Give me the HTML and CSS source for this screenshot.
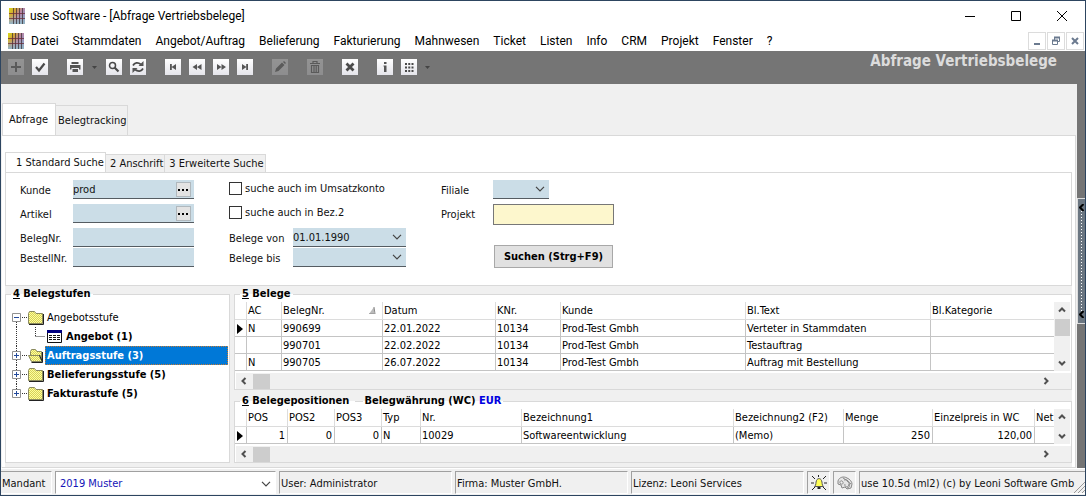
FILE: index.html
```html
<!DOCTYPE html>
<html lang="de">
<head>
<meta charset="utf-8">
<title>use Software - [Abfrage Vertriebsbelege]</title>
<link rel="stylesheet" href="styles.css">
</head>
<body>
<svg class="defs" aria-hidden="true">
  <defs>
    <linearGradient id="lgTop" x1="0" y1="0" x2="1" y2=".6">
      <stop offset="0" stop-color="#d8dc14"/><stop offset=".35" stop-color="#d2a03c"/><stop offset=".65" stop-color="#b884a4"/><stop offset="1" stop-color="#9098c8"/>
    </linearGradient>
    <linearGradient id="lgLow" x1="0" y1="0" x2="0" y2="1">
      <stop offset=".4" stop-color="#9cc0c0" stop-opacity="0"/><stop offset="1" stop-color="#94b4c4"/>
    </linearGradient>
    <pattern id="weave" width="2" height="2" patternUnits="userSpaceOnUse">
      <rect width="2" height="2" fill="#ffff9c"/><rect width="1" height="1" fill="#d6d05a"/><rect x="1" y="1" width="1" height="1" fill="#d6d05a"/>
    </pattern>
    <symbol id="logo" viewBox="0 0 16 16">
      <rect width="16" height="16" fill="url(#lgTop)"/><rect width="16" height="16" fill="url(#lgLow)"/>
      <path d="M4.500 0v16M7.500 0v16M10.500 0v16M13.500 0v16" stroke="#3c3034" stroke-opacity=".75"/>
      <path d="M0 5.500h16M0 10.500h16" stroke="#6b2a38" stroke-opacity=".75"/>
    </symbol>
    <symbol id="down" viewBox="0 0 10 6"><path d="M1 .8l4 4 4-4" fill="none" stroke="#444" stroke-width="1.200"/></symbol>
    <symbol id="arrow" viewBox="0 0 8 8"><path d="M1 5.500l3-3 3 3" fill="none" stroke="#505050" stroke-width="2"/></symbol>
    <symbol id="caret" viewBox="0 0 5 3"><path d="M0 0h5L2.500 3z" fill="#444"/></symbol>
    <symbol id="folder" viewBox="0 0 16 14">
      <path d="M.5 12.500V2.500l1-2h5l1.500 2h6.500v10z" fill="url(#weave)" stroke="#8a8a60"/>
      <path d="M1 13.500h14.500V3" fill="none" stroke="#222"/>
    </symbol>
    <symbol id="folderopen" viewBox="0 0 16 14">
      <path d="M2.500 11V2.500l1-2h4l1.500 2h4.500V11z" fill="url(#weave)" stroke="#8a8a60"/>
      <path d="M.5 6.500h10.500l3 6H3.500z" fill="url(#weave)" stroke="#8a8a60"/>
      <path d="M3.500 13.500h11V3M11.500 6l3 7" fill="none" stroke="#222"/>
    </symbol>
  </defs>
</svg>

<div class="window">
  <header class="titlebar">
    <svg class="logo"><use href="#logo"/></svg>
    <h1 class="title">use Software - [Abfrage Vertriebsbelege]</h1>
    <div class="winbuttons">
      <button aria-label="Minimieren"><svg viewBox="0 0 12 12"><path d="M1 6.500h10"/></svg></button>
      <button aria-label="Maximieren"><svg viewBox="0 0 12 12"><path d="M1.500 1.500h9v9h-9z"/></svg></button>
      <button aria-label="Schließen"><svg viewBox="0 0 12 12"><path d="M1 1l10 10M11 1L1 11"/></svg></button>
    </div>
  </header>

  <nav class="menubar">
    <svg class="logo"><use href="#logo"/></svg>
    <button>Datei</button><button>Stammdaten</button><button>Angebot/Auftrag</button><button>Belieferung</button><button>Fakturierung</button><button>Mahnwesen</button><button>Ticket</button><button>Listen</button><button>Info</button><button>CRM</button><button>Projekt</button><button>Fenster</button><button>?</button>
    <div class="mdi">
      <button aria-label="Fenster minimieren"><svg viewBox="0 0 10 10"><path d="M2 8h6" stroke-width="2"/></svg></button>
      <button aria-label="Fenster wiederherstellen"><svg viewBox="0 0 10 10"><path d="M3.500 4V1.500h5v4H7M1.500 4.500h5v4h-5z"/><path d="M3 1.500h6M1 4.500h6" stroke-width="2"/></svg></button>
      <button aria-label="Fenster schließen"><svg viewBox="0 0 10 10"><path d="M2 2l6 6M8 2L2 8" stroke-width="2"/></svg></button>
    </div>
  </nav>

  <div class="toolbar">
    <div class="tools">
      <button class="tool" disabled aria-label="Neu"><svg viewBox="0 0 16 16"><path d="M8 3v10M3 8h10" stroke-width="2"/></svg></button>
      <button class="tool" aria-label="Übernehmen"><svg viewBox="0 0 16 16"><path d="M4 8l3 3.500 5.500-7" stroke-width="2.200"/></svg></button>
    </div>
    <div class="tools">
      <button class="tool" aria-label="Drucken"><svg viewBox="0 0 16 16"><path d="M4.500 3h7v2h-7zM3 6h10.500v4.500H12V9H4.500v1.500H3zM5.500 10h5.500v3H5.500z" class="solid"/></svg></button>
      <svg class="caret"><use href="#caret"/></svg>
      <button class="tool" aria-label="Suchen"><svg viewBox="0 0 16 16"><circle cx="6.500" cy="6.500" r="3" stroke-width="1.500"/><path d="M8.500 8.500l4 4" stroke-width="2.200"/></svg></button>
      <button class="tool" aria-label="Aktualisieren"><svg viewBox="0 0 16 16"><path d="M3 6.500c1.500-3 5-3.500 8-1M13 9.500c-1.500 3-5 3.500-8 1" stroke-width="1.700"/><path d="M13.500 2v5H8.500zM2.500 14V9h5z" class="solid"/></svg></button>
    </div>
    <div class="tools">
      <button class="tool" aria-label="Erster"><svg viewBox="0 0 16 16"><path d="M5 5h1.800v6H5zM11 5v6L6.500 8z" class="solid"/></svg></button>
      <button class="tool" aria-label="Zurück"><svg viewBox="0 0 16 16"><path d="M8 5v6L3.500 8zM12.500 5v6L8 8z" class="solid"/></svg></button>
      <button class="tool" aria-label="Weiter"><svg viewBox="0 0 16 16"><path d="M4 5v6l4.500-3zM8.500 5v6L13 8z" class="solid"/></svg></button>
      <button class="tool" aria-label="Letzter"><svg viewBox="0 0 16 16"><path d="M9.200 5H11v6H9.200zM5 5v6l4.500-3z" class="solid"/></svg></button>
    </div>
    <div class="tools"><button class="tool" disabled aria-label="Bearbeiten"><svg viewBox="0 0 16 16"><path d="M3 13l1-3.500L10 3.500l2.500 2.500-6 6zM11 3l1-1 2 2-1 1z" class="solid"/></svg></button></div>
    <div class="tools"><button class="tool" disabled aria-label="Löschen"><svg viewBox="0 0 16 16"><path d="M3 4.500h10M6 4V2.500h4V4M4.500 6.500v7h7v-7zM7 7v6M9.200 7v6" stroke-width="1.200"/></svg></button></div>
    <div class="tools"><button class="tool" aria-label="Abbrechen"><svg viewBox="0 0 16 16"><path d="M4.500 4.500l7 7M11.500 4.500l-7 7" stroke-width="2.800"/></svg></button></div>
    <div class="tools">
      <button class="tool" aria-label="Info"><svg viewBox="0 0 16 16"><path d="M7 3h2.500v2H7zM6.500 6.500h3V13H7V7.500h-.5z" class="solid"/></svg></button>
      <button class="tool" aria-label="Ansicht"><svg viewBox="0 0 16 16"><path d="M4 5h8.500M4 8.500h8.500M4 12h8.500" stroke-width="2" stroke-dasharray="2 1.250"/></svg></button>
      <svg class="caret"><use href="#caret"/></svg>
    </div>
    <h2 class="formname">Abfrage Vertriebsbelege</h2>
  </div>

  <div class="body">
    <main class="content">
      <div class="tabs outer">
        <button class="tab active">Abfrage</button><button class="tab">Belegtracking</button>
      </div>
      <div class="page">
        <div class="tabs inner">
          <button class="tab active">1 Standard Suche</button><button class="tab">2 Anschrift</button><button class="tab">3 Erweiterte Suche</button>
        </div>
        <form class="search">
          <div class="fields first">
            <label for="kunde">Kunde</label>
            <div class="field"><input id="kunde" value="prod"><button type="button" class="dots" aria-label="Kunde wählen"></button></div>
            <label for="artikel">Artikel</label>
            <div class="field"><input id="artikel"><button type="button" class="dots" aria-label="Artikel wählen"></button></div>
            <label for="belegnr">BelegNr.</label>
            <div class="field"><input id="belegnr"></div>
            <label for="bestellnr">BestellNr.</label>
            <div class="field"><input id="bestellnr"></div>
          </div>
          <div class="fields second">
            <label class="check"><input type="checkbox">suche auch im Umsatzkonto</label>
            <label class="check"><input type="checkbox">suche auch in Bez.2</label>
            <label for="von">Belege von</label>
            <div class="field"><select id="von"><option>01.01.1990</option></select><svg class="down"><use href="#down"/></svg></div>
            <label for="bis">Belege bis</label>
            <div class="field"><select id="bis"><option></option></select><svg class="down"><use href="#down"/></svg></div>
          </div>
          <div class="fields third">
            <label for="filiale">Filiale</label>
            <div class="field short"><select id="filiale"><option></option></select><svg class="down"><use href="#down"/></svg></div>
            <label for="projekt">Projekt</label>
            <input id="projekt" class="project">
            <button type="button" class="submit">Suchen (Strg+F9)</button>
          </div>
        </form>

        <div class="split">
          <fieldset class="box treebox">
            <legend><u>4</u> Belegstufen</legend>
            <ul class="tree">
              <li><svg class="gutter" viewBox="0 0 17 19"><path class="dots-line" d="M5.500 14v5M11 9.500h5"/><path class="sq" d="M1.500 5.500h8v8h-8z"/><path class="sign" d="M3 9.500h5"/></svg><svg class="folder"><use href="#folder"/></svg><span>Angebotsstufe</span></li>
              <li><svg class="gutter wide" viewBox="0 0 36 19"><path class="dots-line" d="M5.500 0v19M24.500 0v9M24.500 9.500h10"/></svg><svg class="sheet" viewBox="0 0 15 13"><path d="M.5 .5h14v12H.5z" fill="#fff" stroke="#111"/><path d="M0 0h15v3H0z" fill="#000080"/><path d="M2 5.500h11M2 7.500h11M2 9.500h11" stroke="#111" stroke-dasharray="3 1"/></svg><span class="strong">Angebot (1)</span></li>
              <li><svg class="gutter" viewBox="0 0 17 19"><path class="dots-line" d="M5.500 0v19M11 9.500h5"/><path class="sq" d="M1.500 5.500h8v8h-8z"/><path class="sign" d="M3 9.500h5M5.500 7v5"/></svg><svg class="folder"><use href="#folderopen"/></svg><span class="strong selected">Auftragsstufe (3)</span></li>
              <li><svg class="gutter" viewBox="0 0 17 19"><path class="dots-line" d="M5.500 0v19M11 9.500h5"/><path class="sq" d="M1.500 5.500h8v8h-8z"/><path class="sign" d="M3 9.500h5M5.500 7v5"/></svg><svg class="folder"><use href="#folder"/></svg><span class="strong">Belieferungsstufe (5)</span></li>
              <li><svg class="gutter" viewBox="0 0 17 19"><path class="dots-line" d="M5.500 0v6M11 9.500h5"/><path class="sq" d="M1.500 5.500h8v8h-8z"/><path class="sign" d="M3 9.500h5M5.500 7v5"/></svg><svg class="folder"><use href="#folder"/></svg><span class="strong">Fakturastufe (5)</span></li>
            </ul>
          </fieldset>

          <div class="grids">
            <fieldset class="box gridbox">
              <legend><u>5</u> Belege</legend>
              <div class="gridrow">
                <table class="data docs">
                  <colgroup><col class="mark"><col class="ac"><col class="nr"><col class="date"><col class="knr"><col class="kunde"><col class="text"><col></colgroup>
                  <thead><tr><th></th><th>AC</th><th>BelegNr.<svg class="sort" viewBox="0 0 7 7"><path d="M0 7L5 0v7z" fill="#bbb"/><path d="M5 0l1 7H0" fill="none" stroke="#888"/></svg></th><th>Datum</th><th>KNr.</th><th>Kunde</th><th>Bl.Text</th><th>Bl.Kategorie</th></tr></thead>
                  <tbody>
                    <tr><td><svg class="current" viewBox="0 0 6 10"><path d="M0 0l6 5-6 5z"/></svg></td><td>N</td><td>990699</td><td>22.01.2022</td><td>10134</td><td>Prod-Test Gmbh</td><td>Verteter in Stammdaten</td><td></td></tr>
                    <tr><td></td><td></td><td>990701</td><td>22.02.2022</td><td>10134</td><td>Prod-Test Gmbh</td><td>Testauftrag</td><td></td></tr>
                    <tr><td></td><td>N</td><td>990705</td><td>26.07.2022</td><td>10134</td><td>Prod-Test Gmbh</td><td>Auftrag mit Bestellung</td><td></td></tr>
                  </tbody>
                </table>
                <div class="vscroll"><svg><use href="#arrow"/></svg><i class="thumb"></i><svg class="flip"><use href="#arrow"/></svg></div>
              </div>
              <div class="hscroll"><svg class="left"><use href="#arrow"/></svg><i class="thumb"></i><svg class="right"><use href="#arrow"/></svg></div>
            </fieldset>

            <fieldset class="box gridbox">
              <legend class="parts"><span><u>6</u> Belegepositionen</span><i class="rule"></i><span>Belegwährung (WC) <b class="currency">EUR</b></span></legend>
              <div class="gridrow">
                <table class="data items">
                  <colgroup><col class="mark"><col class="p1"><col class="p2"><col class="p2"><col class="typ"><col class="nr"><col><col class="bez2"><col class="menge"><col class="preis"><col class="netto"></colgroup>
                  <thead><tr><th></th><th>POS</th><th>POS2</th><th>POS3</th><th>Typ</th><th>Nr.</th><th>Bezeichnung1</th><th>Bezeichnung2 (F2)</th><th>Menge</th><th>Einzelpreis in WC</th><th>Net</th></tr></thead>
                  <tbody>
                    <tr><td><svg class="current" viewBox="0 0 6 10"><path d="M0 0l6 5-6 5z"/></svg></td><td class="num">1</td><td class="num">0</td><td class="num">0</td><td>N</td><td>10029</td><td>Softwareentwicklung</td><td>(Memo)</td><td class="num">250</td><td class="num">120,00</td><td></td></tr>
                  </tbody>
                </table>
                <div class="vscroll"><svg><use href="#arrow"/></svg><svg class="flip"><use href="#arrow"/></svg></div>
              </div>
              <div class="hscroll"><svg class="left"><use href="#arrow"/></svg><i class="thumb"></i><svg class="right"><use href="#arrow"/></svg></div>
            </fieldset>
          </div>
        </div>
      </div>
    </main>
    <aside class="strip"><button class="grip" aria-label="Seitenleiste öffnen"><svg viewBox="0 0 5 7"><path d="M4.500 0L1 3.500 4.500 7" /></svg><i></i><svg viewBox="0 0 5 7"><path d="M4.500 0L1 3.500 4.500 7"/></svg></button></aside>
  </div>

  <footer class="status">
    <label class="panel mandant" for="mandant">Mandant</label>
    <div class="panel combo"><select id="mandant"><option>2019 Muster</option></select><svg class="down"><use href="#down"/></svg></div>
    <div class="panel info">User: Administrator</div>
    <div class="panel info">Firma: Muster GmbH.</div>
    <div class="panel info">Lizenz: Leoni Services</div>
    <div class="panel icon"><svg viewBox="0 0 16 16"><path d="M1 1l3 3M15 1l-3 3M0 8h3M13 8h3M1 15l3-3M15 15l-3-3M7.500 0v2" stroke="#222"/><path d="M3.500 11.500c2-1.500 1-4 2-6 1-2.500 4-2.500 5 0 1 2 0 4.500 2 6z" fill="#ffff55" stroke="#555"/><path d="M6.500 13h3" stroke="#222" stroke-width="2"/></svg></div>
    <div class="panel icon"><svg viewBox="0 0 16 16"><path d="M1 6c1-4 6-5 9-3 3 1 5 4 5 6l-1 4-4 1-2-2-3 1-1-3-3-1zM4 9c2 1 3-2 1-3s-3 2-1 3M7 5c3-1 6 2 5 5s-5 2-4-1M10 6l4 3M6 3l5 3M10 13c2 0 3-2 2-4" fill="#ddd" fill-opacity=".6" stroke="#888"/></svg></div>
    <div class="panel version"><span>use 10.5d (ml2) (c) by Leoni Software Gmb</span><svg viewBox="0 0 12 12"><path d="M0 12L12 0M4 12l8-8M8 12l4-4" stroke="#999"/></svg></div>
  </footer>
</div>
</body>
</html>
```

FILE: styles.css
```css
* { box-sizing: border-box; }
html, body { height: 100%; }
body {
  margin: 0;
  font: 11px/16px "DejaVu Sans Condensed", "Noto Sans", sans-serif;
  color: #111;
  background: #f0f0f0;
}
button, input, select { font: inherit; color: inherit; margin: 0; padding: 0; border: 0; background: none; border-radius: 0; }
svg { display: block; fill: none; flex: none; }
.defs { position: absolute; width: 0; height: 0; }

.window { min-height: 100%; display: flex; flex-direction: column; border: 1px solid #2d4560; overflow: hidden; }
.logo { width: 16px; height: 16px; }

.titlebar { display: flex; align-items: center; height: 30px; padding-left: 8px; gap: 5px; background: #fff; }
.title { margin: 0; font: 12px/16px Roboto, "Noto Sans", sans-serif; color: #000; }
.winbuttons { margin-left: auto; display: flex; }
.winbuttons button { width: 46px; height: 30px; display: grid; place-items: center; }
.winbuttons svg { width: 12px; height: 12px; stroke: #000; }

.menubar { display: flex; align-items: center; height: 20px; padding-left: 7px; background: #fff; font: 12px/18px Roboto, "Noto Sans", sans-serif; color: #000; }
.menubar > button { padding: 0 7px; }
.menubar .mdi { margin-left: auto; display: flex; gap: 1px; padding-right: 1px; }
.mdi button { width: 18px; height: 18px; border: 1px solid #dcdcdc; display: grid; place-items: center; }
.mdi svg { width: 10px; height: 10px; stroke: #6b7a8f; }

.toolbar { display: flex; align-items: flex-start; gap: 19px; height: 33px; padding: 8px 28px 0 7px; background: #757575; }
.tools { display: flex; align-items: center; gap: 8px; }
.tool { width: 16px; height: 16px; background: linear-gradient(#fff, #e4e4ea); }
.tool svg { width: 16px; height: 16px; stroke: #4a4a4a; }
.tool .solid { fill: #555; stroke: none; }
.tool:disabled { opacity: .22; }
.tool:disabled svg { stroke: #000; }
.tool:disabled .solid { fill: #000; }
.caret { width: 5px; height: 3px; margin: 0 1px; }
.tools > .caret:last-child { margin-left: 0; }
.formname { margin: -8px 0 0 auto; font: bold 15px/20px "DejaVu Sans Condensed", "Noto Sans", sans-serif; color: #dcdcdc; white-space: nowrap; }

.body { flex: 1; display: flex; }
.content { flex: 1; min-width: 0; display: flex; flex-direction: column; padding: 19px 1px 0 1px; }
.tabs { display: flex; align-items: flex-end; }
.tab { border: 1px solid #d9d9d9; border-bottom: 0; border-left: 0; background: #f0f0f0; white-space: nowrap; text-align: left; }
.tab.active { background: #fff; border-left: 1px solid #d9d9d9; }
.outer .tab { width: 72px; height: 30px; padding-left: 2px; }
.outer .tab.active { width: 54px; height: 33px; margin-bottom: -1px; padding-left: 6px; }
.page { flex: 1; display: flex; flex-direction: column; background: #fff; border: 1px solid #d9d9d9; border-left: 0; padding: 16px 3px 0 3px; }
.inner .tab { height: 18px; padding: 0 1px 0 4px; }
.inner .tab.active { height: 21px; margin-bottom: -1px; padding: 0 1px 0 10px; }

.search { display: flex; align-items: flex-start; gap: 35px; border: 1px solid #d9d9d9; height: 114px; padding: 7px 0 0 14px; }
.fields { display: grid; align-items: start; }
.fields label { padding-top: 3px; white-space: nowrap; }
.first { grid-template-columns: 53px 121px; grid-template-rows: 24px 24px 20px 20px; }
.second { grid-template-columns: 64px 113px; grid-template-rows: 24px 24px 20px 20px; }
.third { grid-template-columns: 52px 121px; grid-template-rows: 24px 41px 24px; }
.fields .check { grid-column: 1 / -1; display: flex; gap: 3px; padding-top: 1px; }
.check input { appearance: none; width: 13px; height: 13px; border: 1px solid #333; background: #fff; margin-top: 1px; }
.field { display: flex; align-items: center; position: relative; height: 19px; background: #cbdde7; border-bottom: 1px solid #555c62; }
.field input, .field select { width: 100%; height: 18px; min-width: 0; appearance: none; padding: 1px 0 0; }
.short { width: 56px; }
.down { position: absolute; right: 4px; width: 10px; height: 6px; pointer-events: none; }
.dots { flex: none; width: 15px; height: 15px; margin-right: 3px; border: 1px solid #b0b8bd; background: radial-gradient(circle, #000 1px, transparent 1px) 0 5px / 4px 4px repeat-x #e3e3e3; }
.project { height: 21px; border: 1px solid #777; background: #fdf7cd; padding: 0 3px; }
.submit { grid-column: 2; width: 119px; height: 23px; margin-left: 1px; border: 1px solid #a8a8a8; background: #e1e1e1; font-weight: bold; color: #000; white-space: nowrap; }

.split { flex: 1; display: flex; gap: 4px; padding-bottom: 4px; background: #f0f0f0; }
.box { position: relative; margin: 0; padding: 0; border: 1px solid #d9d9d9; background: #fff; min-width: 0; }
.box legend { margin-left: 5px; padding: 0 2px; font-weight: bold; color: #000; }
.treebox { width: 225px; }
.tree { list-style: none; margin: 6px 0 0; padding: 0 1px 0 5px; color: #000; }
.tree li { display: flex; align-items: center; height: 19px; }
.gutter { width: 17px; height: 19px; }
.gutter.wide { width: 36px; }
.dots-line { stroke: #333; stroke-dasharray: 1 1; }
.sq { stroke: #919191; fill: #fff; }
.sign { stroke: #234a9c; }
.folder { width: 16px; height: 14px; }
.sheet { width: 15px; height: 13px; }
.tree span { margin-left: 1px; padding: 0 2px; height: 19px; line-height: 20px; }
.tree .sheet + span { margin-left: 2px; }
.strong { font-weight: bold; }
.selected { flex: 1; background: #0078d7; color: #fff; outline: 1px dotted #c87a30; outline-offset: -1px; }

.grids { flex: 1; min-width: 0; display: flex; flex-direction: column; gap: 3px; }
.gridbox legend { height: 16px; }
.gridrow { display: flex; align-items: stretch; padding-right: 1px; }
.data { flex: 1; width: 0; table-layout: fixed; border-collapse: separate; border-spacing: 0; color: #000; }
.data th, .data td { height: 17px; padding: 2px 0 0 1px; border: solid #c4c4c4; border-width: 0 1px 1px 0; font-weight: normal; text-align: left; line-height: 14px; white-space: nowrap; overflow: hidden; }
.data th { height: 18px; padding-top: 1px; border-color: #dcdcdc; position: relative; line-height: 16px; }
.data tr > :last-child { border-right: 0; }
.data .num { text-align: right; padding-right: 2px; }
.current { width: 6px; height: 10px; margin-left: 1px; fill: #000; }
.sort { position: absolute; right: 6px; top: 5px; width: 7px; height: 7px; }
.mark { width: 12px; }
.ac { width: 35px; }
.nr { width: 101px; }
.date { width: 113px; }
.knr { width: 65px; }
.kunde { width: 185px; }
.text { width: 185px; }
.p1 { width: 41px; }
.p2 { width: 47px; }
.typ { width: 39px; }
.bez2 { width: 110px; }
.menge { width: 89px; }
.preis { width: 102px; }
.netto { width: 19px; }
.vscroll { width: 16px; display: flex; flex-direction: column; align-items: center; justify-content: space-between; background: #f0f0f0; padding: 4px 0; }
.vscroll svg, .hscroll svg { width: 8px; height: 8px; }
.thumb { background: #cdcdcd; }
.vscroll .thumb { width: 15px; height: 17px; margin: 5px 0 auto; }
.flip { transform: rotate(180deg); }
.left { transform: rotate(-90deg); }
.right { transform: rotate(90deg); margin-left: auto; }
.hscroll { display: flex; align-items: center; height: 16px; margin: 2px 0 0 1px; padding: 0 21px 0 4px; background: #f0f0f0; }
.hscroll .thumb { width: 17px; height: 15px; margin-left: 5px; }
.parts { display: flex; align-items: center; }
.rule { width: 8px; height: 1px; margin: 0 1px 0 6px; background: #d9d9d9; }
.currency { color: #0000e0; }

.strip { width: 8px; background: #757575; padding-top: 114px; }
.grip { display: flex; flex-direction: column; align-items: center; width: 8px; height: 126px; border: 1px solid #ddd; border-right: 0; background: #6b7681; padding: 5px 0; }
.grip svg { width: 5px; height: 7px; stroke: #000; stroke-width: 2; }
.grip i { flex: 1; width: 1px; background: repeating-linear-gradient(#fff 0 1px, transparent 1px 3px); }

.status { display: flex; gap: 3px; height: 27px; padding: 2px 0 1px; border-top: 1px solid #fff; }
.panel { display: flex; align-items: center; border: 1px solid #a0a0a0; border-color: #a0a0a0 #fff #fff #a0a0a0; padding: 2px 0 0 1px; white-space: nowrap; overflow: hidden; }
.mandant { width: 51px; border-left: 0; }
.combo { width: 221px; position: relative; background: #fff; }
.combo select { width: 100%; height: 20px; appearance: none; padding-left: 3px; color: #1414b8; }
.info { flex: 0 1 173px; }
.icon { width: 23px; justify-content: center; padding: 0; }
.icon svg { width: 16px; height: 16px; }
.version { flex: 1; justify-content: space-between; border-right: 0; }
.version svg { width: 12px; height: 12px; align-self: flex-end; }
```
